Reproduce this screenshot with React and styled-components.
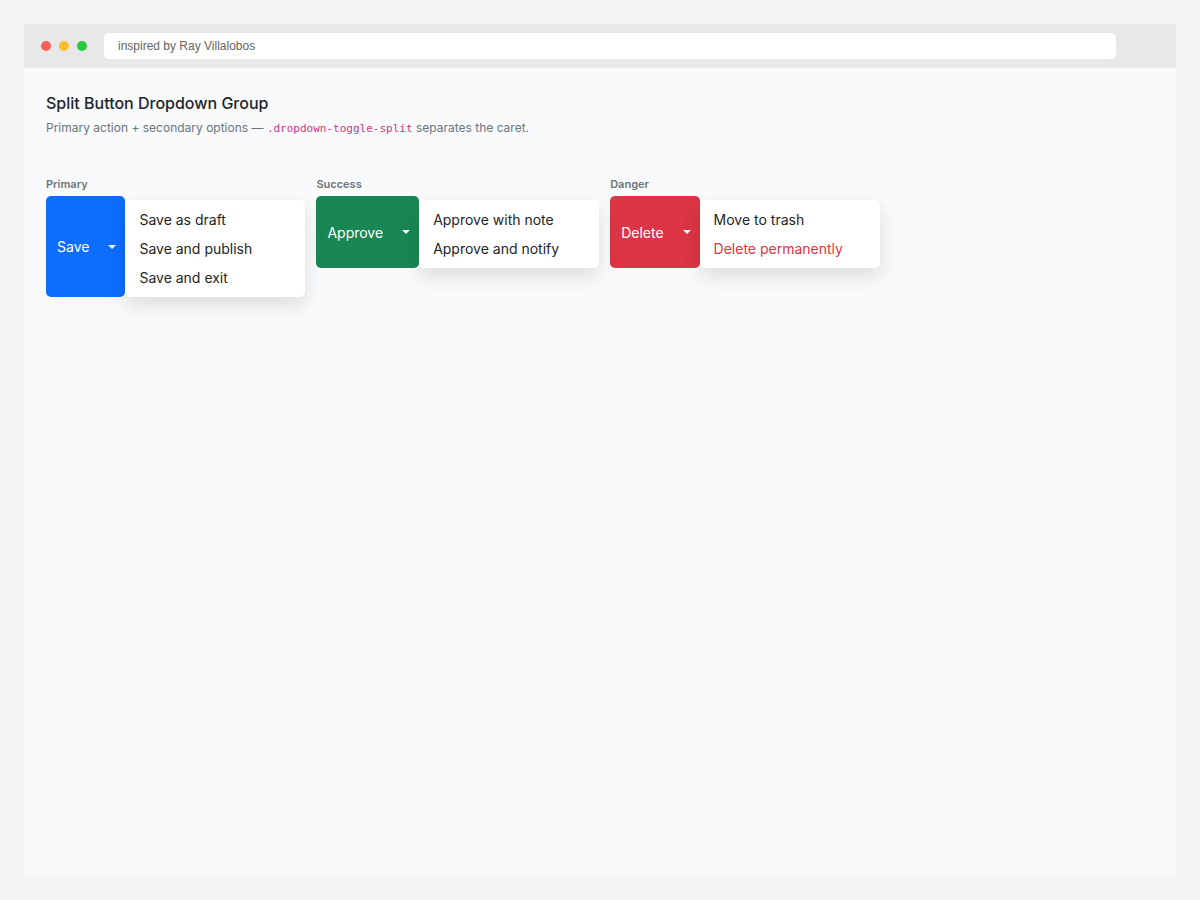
import React from "react";
import styled, { createGlobalStyle } from "styled-components";

const GlobalStyle = createGlobalStyle`
  *, *::before, *::after { box-sizing: border-box; }
  body {
    margin: 0;
    background: #f4f5f7;
    color: #212529;
    font-family: Inter, "Liberation Sans", sans-serif;
    font-size: 14px;
  }
`;

const Page = styled.div`
  display: flex;
  min-height: 100vh;
  padding: 24px;
`;

const Window = styled.div`
  display: flex;
  flex: 1;
  flex-direction: column;
  background: #f8fafc;
`;

const TitleBar = styled.header`
  display: flex;
  align-items: center;
  gap: 8px;
  height: 44px;
  padding: 0 60px 0 17px;
  background: #e8e8e8;
`;

const Dot = styled.span`
  width: 10px;
  height: 10px;
  border-radius: 50%;
  background: ${(p) => p.$color};
`;

const Address = styled.input`
  flex: 1;
  min-width: 0;
  height: 26px;
  margin-left: 9px;
  padding: 0 14px;
  border: 0;
  border-radius: 5px;
  background: #fff;
  color: #666;
  font-family: "Liberation Sans", sans-serif;
  font-size: 12px;
`;

const Content = styled.main`
  padding: 23px 22px;
`;

const Title = styled.h1`
  margin: 0 0 4px;
  color: #212529;
  font-size: 16px;
  font-weight: 500;
  line-height: 24px;
`;

const Lead = styled.p`
  margin: 0 0 38px;
  color: #6c757d;
  font-size: 12px;
  line-height: 18px;
`;

const Code = styled.code`
  color: #d63384;
  font-family: "DejaVu Sans Mono", monospace;
  font-size: 11px;
`;

const Groups = styled.div`
  display: flex;
  flex-wrap: wrap;
  align-items: flex-start;
  gap: 11px;
`;

const GroupLabel = styled.div`
  margin-bottom: 4px;
  color: #6c757d;
  font-size: 11px;
  font-weight: 600;
  line-height: 16px;
`;

const ButtonGroup = styled.div`
  display: flex;
`;

const Button = styled.button`
  padding: 0 12px 0 11px;
  border: 0;
  border-radius: 5px 0 0 5px;
  background: ${(p) => p.$color};
  color: #fff;
  font: inherit;
  cursor: pointer;
`;

const Toggle = styled(Button)`
  padding: 0 9px 0 7px;
  border-radius: 0 5px 5px 0;

  &::after {
    content: "";
    display: block;
    border-top: 4px solid;
    border-right: 4px solid transparent;
    border-left: 4px solid transparent;
  }
`;

const Menu = styled.ul`
  z-index: 1;
  width: 180px;
  margin: 4px 0 0;
  padding: 5px 0;
  border-radius: 5px;
  background: #fff;
  box-shadow: 0 8px 20px rgba(0, 0, 0, 0.12);
  list-style: none;
`;

const MenuLink = styled.a`
  display: block;
  padding: 4px 14px;
  color: ${(p) => (p.$danger ? "#dc3545" : "#212529")};
  line-height: 21px;
  text-decoration: none;
`;

const groups = [
  {
    label: "Primary",
    action: "Save",
    color: "#0d6efd",
    items: [{ text: "Save as draft" }, { text: "Save and publish" }, { text: "Save and exit" }],
  },
  {
    label: "Success",
    action: "Approve",
    color: "#198754",
    items: [{ text: "Approve with note" }, { text: "Approve and notify" }],
  },
  {
    label: "Danger",
    action: "Delete",
    color: "#dc3545",
    items: [{ text: "Move to trash" }, { text: "Delete permanently", danger: true }],
  },
];

function SplitButton({ label, action, color, items }) {
  const id = `label-${label.toLowerCase()}`;
  return (
    <section aria-labelledby={id}>
      <GroupLabel id={id}>{label}</GroupLabel>
      <ButtonGroup role="group" aria-labelledby={id}>
        <Button type="button" $color={color}>{action}</Button>
        <Toggle type="button" $color={color} aria-label={`${action} options`} aria-expanded="true" />
        <Menu>
          {items.map((item) => (
            <li key={item.text}>
              <MenuLink href="#" $danger={item.danger}>{item.text}</MenuLink>
            </li>
          ))}
        </Menu>
      </ButtonGroup>
    </section>
  );
}

export default function App() {
  return (
    <>
      <GlobalStyle />
      <Page>
        <Window>
          <TitleBar>
            <Dot $color="#ff5f57" />
            <Dot $color="#febc2e" />
            <Dot $color="#28c840" />
            <Address type="text" aria-label="Address" defaultValue="inspired by Ray Villalobos" />
          </TitleBar>
          <Content>
            <Title>Split Button Dropdown Group</Title>
            <Lead>
              Primary action + secondary options — <Code>.dropdown-toggle-split</Code> separates the caret.
            </Lead>
            <Groups>
              {groups.map((group) => (
                <SplitButton key={group.label} {...group} />
              ))}
            </Groups>
          </Content>
        </Window>
      </Page>
    </>
  );
}
